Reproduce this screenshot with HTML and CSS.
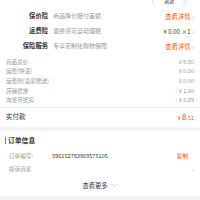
FILE: index.html
```html
<!DOCTYPE html>
<html>
<head>
<meta charset="utf-8">
<link rel="stylesheet" href="styles.css">
</head>
<body>
<div class="page">
  <div class="card">
    <div class="topbar"><span class="btn">退款</span></div>
    <div class="ins">
      <div class="ins-row"><span class="ins-label">保价险</span><span class="ins-desc">商品降价赔付差额</span><span class="ins-link">查看详情 <i class="chev">›</i></span></div>
      <div class="ins-row"><span class="ins-label">运费险</span><span class="ins-desc">退换货可自动理赔</span><span class="ins-val">¥ 0.00 ×1 <i class="chev gray">›</i></span></div>
      <div class="ins-row"><span class="ins-label">保险服务</span><span class="ins-desc">专享定制化购物保障</span><span class="ins-link">查看详情 <i class="chev">›</i></span></div>
    </div>
    <div class="prices">
      <div class="p-row"><span>商品总价</span><span>¥ 9.80</span></div>
      <div class="p-row"><span>运费(快递)</span><span>¥ 0.00</span></div>
      <div class="p-row"><span>运费险(卖家赠送)</span><span>¥ 0.00</span></div>
      <div class="p-row"><span>店铺优惠</span><span>- ¥ 1.00</span></div>
      <div class="p-row"><span>淘金币抵扣</span><span>- ¥ 0.29</span></div>
    </div>
    <div class="pay"><span>实付款</span><span class="pay-val">¥ <b>8</b>.51</span></div>
  </div>
  <div class="card order">
    <div class="o-title">订单信息</div>
    <div class="o-row"><span class="o-label">订单编号:</span><span class="o-num">596152783968575105</span><span class="copy">复制</span></div>
    <div class="o-row"><span class="o-label">投诉商家</span><span class="o-fill"></span><i class="chev gray">›</i></div>
    <div class="more">查看更多 <svg class="down" viewBox="0 0 8 5" width="7" height="5"><path d="M1 1 L4 4 L7 1" fill="none" stroke="#bbb" stroke-width="0.8"/></svg></div>
  </div>
</div>
</body>
</html>
```
FILE: styles.css
```css
html, body {
  margin: 0;
  padding: 0;
  background: #f4f4f4;
}
body {
  font-family: "Noto Sans CJK SC", "Noto Sans", sans-serif;
  width: 200px;
  height: 200px;
  overflow: hidden;
}
.page {
  display: flex;
  flex-direction: column;
  gap: 4px;
}
.card {
  background: #fff;
}
.topbar {
  height: 6px;
  display: flex;
  justify-content: flex-end;
  padding-right: 14px;
  overflow: hidden;
}
.btn {
  display: block;
  width: 32px;
  height: 12px;
  margin-top: -6px;
  border: 1px solid #ddd;
  border-radius: 7px;
  font-size: 5px;
  line-height: 12px;
  text-align: center;
  color: #333;
}
.ins {
  padding: 2px 6px 2px 6px;
  display: flex;
  flex-direction: column;
}
.ins-row {
  display: flex;
  align-items: center;
  height: 15px;
  font-size: 6px;
}
.ins-label {
  width: 42px;
  text-align: right;
  font-weight: bold;
  color: #333;
  font-size: 6.3px;
}
.ins-desc {
  flex: 1;
  margin-left: 5px;
  color: #999;
}
.ins-link {
  color: #ff5000;
  font-size: 6.3px;
}
.ins-val {
  color: #333;
  font-size: 6px;
}
.chev {
  font-style: normal;
  color: #ff9a66;
  font-size: 7px;
}
.chev.gray {
  color: #bbb;
}
.prices {
  padding: 2px 6px 2px 6px;
  border-bottom: 1px solid #eee;
  display: flex;
  flex-direction: column;
}
.p-row {
  display: flex;
  justify-content: space-between;
  align-items: center;
  height: 9.6px;
  font-size: 5.6px;
  color: #999;
}
.pay {
  display: flex;
  justify-content: space-between;
  align-items: center;
  height: 17px;
  padding: 0 6px 2px 6px;
  font-size: 6.5px;
  color: #333;
}
.pay-val {
  color: #ff5000;
  font-size: 5.5px;
}
.pay-val b {
  font-weight: normal;
  font-size: 8px;
}
.order {
  padding: 0 6px 0 6px;
  display: flex;
  flex-direction: column;
}
.o-title {
  display: flex;
  align-items: center;
  font-size: 6.8px;
  font-weight: bold;
  color: #333;
  border-left: 1.5px solid #ff5000;
  padding-left: 2px;
  margin-left: -1px;
  line-height: 7px;
  height: 7px;
  margin-top: 6px;
  margin-bottom: 5px;
}
.o-row {
  display: flex;
  align-items: center;
  height: 13.5px;
  padding-left: 3px;
  font-size: 5.6px;
  color: #999;
}
.o-label {
  width: 43px;
}
.o-num {
  flex: 1;
  color: #333;
}
.o-fill {
  flex: 1;
}
.copy {
  color: #ff5000;
  padding-right: 6px;
}
.more {
  height: 20px;
  display: flex;
  align-items: center;
  justify-content: center;
  gap: 3px;
  font-size: 6.3px;
  color: #333;
}
```
